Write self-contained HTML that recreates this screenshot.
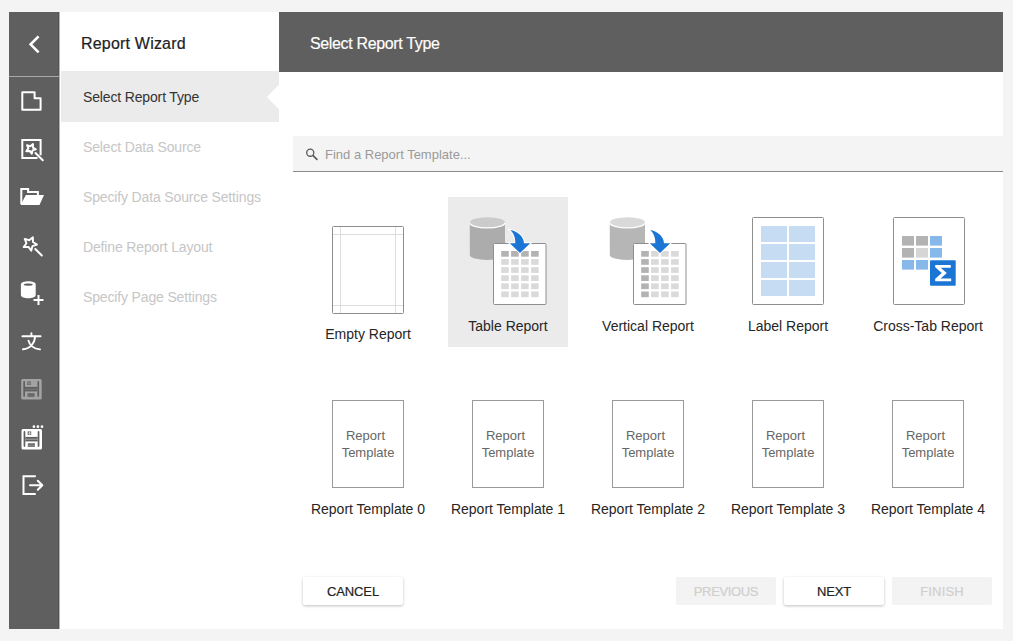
<!DOCTYPE html>
<html><head><meta charset="utf-8">
<style>
*{margin:0;padding:0;box-sizing:border-box}
html,body{width:1013px;height:641px;overflow:hidden;background:#f4f4f4;font-family:"Liberation Sans",sans-serif}
.abs{position:absolute}
#side{left:9px;top:12px;width:50px;height:617px;background:#5f5f5f}
#panel{left:59px;top:12px;width:220px;height:617px;background:#fff}
#main{left:279px;top:12px;width:724px;height:617px;background:#fff}
#hdr{left:279px;top:12px;width:724px;height:60px;background:#5f5f5f}
.t{position:absolute;white-space:nowrap}
#title{left:81px;top:34px;font-size:16px;color:#222;line-height:20px;letter-spacing:0.2px;-webkit-text-stroke:0.2px #222}
#hdrt{left:310px;top:34px;font-size:16px;color:#fff;line-height:20px;letter-spacing:-0.35px;-webkit-text-stroke:0.15px #fff}
#sel{left:61px;top:71px;width:218px;height:51px;background:#ebebeb}
.step{left:83px;font-size:14px;line-height:18px;color:#c6c6c6;letter-spacing:-0.15px}
#search{left:293px;top:136px;width:710px;height:36px;background:#f4f4f4;border-bottom:1px solid #8c8c8c}
#ph{left:325px;top:146px;font-size:13px;line-height:18px;color:#9a9a9a}
.lbl{position:absolute;width:140px;text-align:center;font-size:14px;line-height:18px;color:#262626;white-space:nowrap}
.tpl{position:absolute;width:72px;height:88px;border:1px solid #9a9a9a;background:#fff}
.tplt{position:absolute;left:0;width:100%;text-align:center;font-size:13px;line-height:16.5px;color:#666}
.btn{position:absolute;top:577px;width:100px;height:28px;border-radius:2px;font-size:13px;text-align:center;line-height:30px;letter-spacing:-0.1px;-webkit-text-stroke:0.2px currentColor}
.bw{background:#fff;color:#222;box-shadow:0 1px 3px rgba(0,0,0,0.25)}
.bd{background:#f3f3f3;color:#cfcfcf}
</style></head><body>
<div id="side" class="abs"></div>
<div id="panel" class="abs"></div>
<div id="main" class="abs"></div>
<div class="abs" style="left:58px;top:12px;width:1px;height:617px;background:#555"></div>
<div class="abs" style="left:59px;top:12px;width:1px;height:617px;background:#b4b4b4"></div>

<div id="hdr" class="abs"></div>
<div id="title" class="t">Report Wizard</div>
<div id="hdrt" class="t">Select Report Type</div>
<div id="sel" class="abs"></div>
<svg class="abs" style="left:0;top:0" width="1013" height="641">
  <polygon points="279.5,84.3 266.8,97 279.5,109.7" fill="#fff"/>
</svg>
<div class="t step" style="top:88px;color:#333">Select Report Type</div>
<div class="t step" style="top:138px">Select Data Source</div>
<div class="t step" style="top:188px">Specify Data Source Settings</div>
<div class="t step" style="top:238px">Define Report Layout</div>
<div class="t step" style="top:288px">Specify Page Settings</div>

<div id="search" class="abs"></div>
<div id="ph" class="t">Find a Report Template...</div>
<svg class="abs" style="left:0;top:0" width="1013" height="641"><circle cx="310.25" cy="152.7" r="3.55" fill="none" stroke="#5a5a5a" stroke-width="1.3"/><line x1="313.1" y1="155.6" x2="316.9" y2="159.3" stroke="#5a5a5a" stroke-width="1.7" stroke-linecap="round"/></svg>

<div class="abs" style="left:448px;top:197px;width:120px;height:150px;background:#ebebeb"></div>

<svg class="abs" style="left:0;top:0" width="1013" height="641">
<rect x="332.5" y="226.5" width="71" height="87" rx="1" fill="#fff" stroke="#8e8e8e"/>
<path d="M340.5,227 V313 M395.5,227 V313 M333,234.5 H403 M333,305.5 H403" stroke="#dedede" stroke-width="1"/>
<g transform="translate(0,0)">
<path d="M469.8,222.5 A17.6,5.2 0 0 0 505,222.5 V255 A17.6,5 0 0 1 469.8,255 Z" fill="rgba(109,109,109,0.5)"/>
<ellipse cx="487.4" cy="222.5" rx="17.6" ry="5.2" fill="rgba(128,128,128,0.3)"/>
<path d="M469.8,222.7 A17.6,5.2 0 0 0 505,222.7" fill="none" stroke="#fff" stroke-width="1.3"/>
<rect x="493.5" y="243.5" width="52.5" height="61" rx="1" fill="#fff" stroke="#8e8e8e" stroke-width="1"/>
<rect x="501.2" y="251" width="7.6" height="5.7" fill="#b3b3b3"/>
<rect x="511.1" y="251" width="7.6" height="5.7" fill="#b3b3b3"/>
<rect x="521.1" y="251" width="7.6" height="5.7" fill="#b3b3b3"/>
<rect x="531.1" y="251" width="7.6" height="5.7" fill="#b3b3b3"/>
<rect x="501.2" y="259.1" width="7.6" height="5.7" fill="#dadada"/>
<rect x="511.1" y="259.1" width="7.6" height="5.7" fill="#dadada"/>
<rect x="521.1" y="259.1" width="7.6" height="5.7" fill="#dadada"/>
<rect x="531.1" y="259.1" width="7.6" height="5.7" fill="#dadada"/>
<rect x="501.2" y="267.2" width="7.6" height="5.7" fill="#dadada"/>
<rect x="511.1" y="267.2" width="7.6" height="5.7" fill="#dadada"/>
<rect x="521.1" y="267.2" width="7.6" height="5.7" fill="#dadada"/>
<rect x="531.1" y="267.2" width="7.6" height="5.7" fill="#dadada"/>
<rect x="501.2" y="275.3" width="7.6" height="5.7" fill="#dadada"/>
<rect x="511.1" y="275.3" width="7.6" height="5.7" fill="#dadada"/>
<rect x="521.1" y="275.3" width="7.6" height="5.7" fill="#dadada"/>
<rect x="531.1" y="275.3" width="7.6" height="5.7" fill="#dadada"/>
<rect x="501.2" y="283.4" width="7.6" height="5.7" fill="#dadada"/>
<rect x="511.1" y="283.4" width="7.6" height="5.7" fill="#dadada"/>
<rect x="521.1" y="283.4" width="7.6" height="5.7" fill="#dadada"/>
<rect x="531.1" y="283.4" width="7.6" height="5.7" fill="#dadada"/>
<rect x="501.2" y="291.5" width="7.6" height="5.7" fill="#dadada"/>
<rect x="511.1" y="291.5" width="7.6" height="5.7" fill="#dadada"/>
<rect x="521.1" y="291.5" width="7.6" height="5.7" fill="#dadada"/>
<rect x="531.1" y="291.5" width="7.6" height="5.7" fill="#dadada"/>
<path d="M510.3,230.1 C516.5,231 523.8,236 524,243.2 H530.2 L520,252.9 L509.8,243.2 H515.3 C515.5,237.5 513.5,233 510.3,230.1 Z" fill="#1a75d5" stroke="#fff" stroke-width="2" paint-order="stroke" stroke-linejoin="miter"/>
</g>
<g transform="translate(140,0)">
<path d="M469.8,222.5 A17.6,5.2 0 0 0 505,222.5 V255 A17.6,5 0 0 1 469.8,255 Z" fill="rgba(109,109,109,0.5)"/>
<ellipse cx="487.4" cy="222.5" rx="17.6" ry="5.2" fill="rgba(128,128,128,0.3)"/>
<path d="M469.8,222.7 A17.6,5.2 0 0 0 505,222.7" fill="none" stroke="#fff" stroke-width="1.3"/>
<rect x="493.5" y="243.5" width="52.5" height="61" rx="1" fill="#fff" stroke="#8e8e8e" stroke-width="1"/>
<rect x="501.2" y="251" width="7.6" height="5.7" fill="#b3b3b3"/>
<rect x="511.1" y="251" width="7.6" height="5.7" fill="#dadada"/>
<rect x="521.1" y="251" width="7.6" height="5.7" fill="#dadada"/>
<rect x="531.1" y="251" width="7.6" height="5.7" fill="#dadada"/>
<rect x="501.2" y="259.1" width="7.6" height="5.7" fill="#b3b3b3"/>
<rect x="511.1" y="259.1" width="7.6" height="5.7" fill="#dadada"/>
<rect x="521.1" y="259.1" width="7.6" height="5.7" fill="#dadada"/>
<rect x="531.1" y="259.1" width="7.6" height="5.7" fill="#dadada"/>
<rect x="501.2" y="267.2" width="7.6" height="5.7" fill="#b3b3b3"/>
<rect x="511.1" y="267.2" width="7.6" height="5.7" fill="#dadada"/>
<rect x="521.1" y="267.2" width="7.6" height="5.7" fill="#dadada"/>
<rect x="531.1" y="267.2" width="7.6" height="5.7" fill="#dadada"/>
<rect x="501.2" y="275.3" width="7.6" height="5.7" fill="#b3b3b3"/>
<rect x="511.1" y="275.3" width="7.6" height="5.7" fill="#dadada"/>
<rect x="521.1" y="275.3" width="7.6" height="5.7" fill="#dadada"/>
<rect x="531.1" y="275.3" width="7.6" height="5.7" fill="#dadada"/>
<rect x="501.2" y="283.4" width="7.6" height="5.7" fill="#b3b3b3"/>
<rect x="511.1" y="283.4" width="7.6" height="5.7" fill="#dadada"/>
<rect x="521.1" y="283.4" width="7.6" height="5.7" fill="#dadada"/>
<rect x="531.1" y="283.4" width="7.6" height="5.7" fill="#dadada"/>
<rect x="501.2" y="291.5" width="7.6" height="5.7" fill="#b3b3b3"/>
<rect x="511.1" y="291.5" width="7.6" height="5.7" fill="#dadada"/>
<rect x="521.1" y="291.5" width="7.6" height="5.7" fill="#dadada"/>
<rect x="531.1" y="291.5" width="7.6" height="5.7" fill="#dadada"/>
<path d="M510.3,230.1 C516.5,231 523.8,236 524,243.2 H530.2 L520,252.9 L509.8,243.2 H515.3 C515.5,237.5 513.5,233 510.3,230.1 Z" fill="#1a75d5" stroke="#fff" stroke-width="2" paint-order="stroke" stroke-linejoin="miter"/>
</g>
<rect x="752.5" y="217.5" width="71" height="87" rx="1" fill="#fff" stroke="#8e8e8e"/>
<rect x="761" y="226" width="26" height="16" fill="#c5dcf2"/>
<rect x="789" y="226" width="26" height="16" fill="#c5dcf2"/>
<rect x="761" y="244" width="26" height="16" fill="#c5dcf2"/>
<rect x="789" y="244" width="26" height="16" fill="#c5dcf2"/>
<rect x="761" y="262" width="26" height="16" fill="#c5dcf2"/>
<rect x="789" y="262" width="26" height="16" fill="#c5dcf2"/>
<rect x="761" y="280" width="26" height="16" fill="#c5dcf2"/>
<rect x="789" y="280" width="26" height="16" fill="#c5dcf2"/>
<rect x="893.5" y="217.5" width="71" height="87" rx="1" fill="#fff" stroke="#8e8e8e"/>
<rect x="902" y="236" width="12" height="9.6" fill="#b3b3b3"/>
<rect x="916" y="236" width="12" height="9.6" fill="#b3b3b3"/>
<rect x="930" y="236" width="12" height="9.6" fill="#86b8ea"/>
<rect x="902" y="248" width="12" height="9.6" fill="#b3b3b3"/>
<rect x="916" y="248" width="12" height="9.6" fill="#d6d6d6"/>
<rect x="930" y="248" width="12" height="9.6" fill="#86b8ea"/>
<rect x="902" y="260" width="12" height="9.6" fill="#86b8ea"/>
<rect x="916" y="260" width="12" height="9.6" fill="#86b8ea"/>
<rect x="930" y="260.2" width="25.7" height="25.6" rx="1" fill="#1a75d5"/>
<path d="M935.2,265 H950.8 V267.8 H940.6 L946.8,273 L940.6,278.4 H951.2 V281.2 H935.2 V278.8 L941.8,273 L935.2,267.2 Z" fill="#fff"/>
</svg>
<div class="lbl" style="left:298px;top:325px">Empty Report</div>
<div class="lbl" style="left:438px;top:317px">Table Report</div>
<div class="lbl" style="left:578px;top:317px">Vertical Report</div>
<div class="lbl" style="left:718px;top:317px">Label Report</div>
<div class="lbl" style="left:858px;top:317px">Cross-Tab Report</div>

<div class="tpl" style="left:332px;top:400px"><div class="tplt" style="top:27px"><span style="position:relative;left:-2.5px">Report</span><br>Template</div></div>
<div class="tpl" style="left:472px;top:400px"><div class="tplt" style="top:27px"><span style="position:relative;left:-2.5px">Report</span><br>Template</div></div>
<div class="tpl" style="left:612px;top:400px"><div class="tplt" style="top:27px"><span style="position:relative;left:-2.5px">Report</span><br>Template</div></div>
<div class="tpl" style="left:752px;top:400px"><div class="tplt" style="top:27px"><span style="position:relative;left:-2.5px">Report</span><br>Template</div></div>
<div class="tpl" style="left:892px;top:400px"><div class="tplt" style="top:27px"><span style="position:relative;left:-2.5px">Report</span><br>Template</div></div>
<div class="lbl" style="left:298px;top:500px">Report Template 0</div>
<div class="lbl" style="left:438px;top:500px">Report Template 1</div>
<div class="lbl" style="left:578px;top:500px">Report Template 2</div>
<div class="lbl" style="left:718px;top:500px">Report Template 3</div>
<div class="lbl" style="left:858px;top:500px">Report Template 4</div>

<div class="btn bw" style="left:303px">CANCEL</div>
<div class="btn bd" style="left:676px;letter-spacing:-0.35px">PREVIOUS</div>
<div class="btn bw" style="left:784px;letter-spacing:-0.15px">NEXT</div>
<div class="btn bd" style="left:892px;letter-spacing:0.15px">FINISH</div>

<svg class="abs" style="left:0;top:0" width="70" height="641" fill="none" stroke="#fff" stroke-width="2">
  <line x1="9" y1="76.5" x2="59" y2="76.5" stroke="#a8a8a8" stroke-width="1"/>
  <polyline points="38.6,36.3 30.6,44.3 38.6,52.3" stroke-width="2.6"/>
  <path d="M22.3,92.3 H34.6 V98.2 H40.6 V109.8 H22.3 Z" stroke-linejoin="round"/>
  <path d="M40.6,155.2 V140 H22.3 V158 H37.5"/>
  <line x1="35.5" y1="153" x2="42.8" y2="160.3" stroke-linecap="round"/>
  <polygon points="32.96,144.08 32.90,147.54 35.86,149.32 32.56,150.34 31.77,153.71 29.79,150.88 26.34,151.17 28.42,148.41 27.07,145.22 30.34,146.34" stroke-width="2" stroke-linejoin="round"/>
  <polygon points="32.90,237.27 32.96,242.00 36.95,244.57 32.46,246.09 31.25,250.67 28.42,246.87 23.69,247.14 26.43,243.27 24.71,238.86 29.23,240.26" stroke-width="1.9" stroke-linejoin="round"/>
  <line x1="35.3" y1="249" x2="41.8" y2="255.5" stroke-linecap="round"/>
  <!-- folder -->
  <path d="M21.3,204 V189.1 H28.1 V192.1 H37.9 V195.5" stroke-width="2"/>
  <polygon points="25.9,194.9 44,194.9 39.5,204.9 20.5,204.9" fill="#fff" stroke="none"/>
  <!-- db plus -->
  <path d="M20.9,284.5 C20.9,280.3 35.7,280.3 35.7,284.5 V295 C35.7,299.3 20.9,299.3 20.9,295 Z" fill="#fff" stroke="none"/>
  <ellipse cx="28.3" cy="284.6" rx="4.5" ry="1.2" fill="#5f5f5f" stroke="none"/>
  <path d="M38.5,295 V305 M33.5,300 H43.5" stroke-width="2"/>
  <!-- wen -->
  <path d="M22.4,336.3 H40.6 M31.4,333.1 V336 M28.5,340.6 C29.5,344.8 33.2,348.6 40,349.4 M35.1,337.2 C34.6,343 30.6,348.6 23,349.3" stroke-width="1.9" stroke-linecap="round"/>
  <!-- save disabled -->
  <g stroke="none">
    <rect x="21.2" y="378.9" width="20.5" height="20.5" rx="1.5" fill="#a3a3a3"/>
    <rect x="23.3" y="381.1" width="1.7" height="15.8" rx="0.8" fill="#5f5f5f"/>
    <rect x="37.4" y="381.1" width="1.7" height="15.8" rx="0.8" fill="#5f5f5f"/>
    <rect x="27.3" y="381.4" width="3.6" height="3.5" fill="#5f5f5f"/>
    <rect x="28.8" y="381.4" width="0.6" height="3.5" fill="#a3a3a3"/>
    <rect x="27.3" y="382.8" width="3.6" height="0.6" fill="#a3a3a3"/>
    <rect x="25.0" y="386.9" width="12.4" height="4.5" fill="#5f5f5f"/>
    <rect x="25.0" y="388.8" width="12.4" height="0.7" fill="#a3a3a3" opacity="0.6"/>
    <rect x="27.5" y="393.3" width="7.1" height="3.5" fill="#5f5f5f"/>
    <rect x="27.5" y="394.8" width="7.1" height="0.6" fill="#a3a3a3" opacity="0.6"/>
  </g>
  <!-- save as -->
  <g stroke="none">
    <rect x="21.5" y="428.9" width="20.5" height="20.5" rx="1.5" fill="#fff"/>
    <rect x="23.6" y="431.1" width="1.7" height="15.8" rx="0.8" fill="#5f5f5f"/>
    <rect x="37.7" y="431.1" width="1.7" height="15.8" rx="0.8" fill="#5f5f5f"/>
    <rect x="27.6" y="431.4" width="3.6" height="3.5" fill="#5f5f5f"/>
    <rect x="29.1" y="431.4" width="0.6" height="3.5" fill="#fff"/>
    <rect x="27.6" y="432.8" width="3.6" height="0.6" fill="#fff"/>
    <rect x="25.3" y="436.9" width="12.4" height="4.5" fill="#5f5f5f"/>
    <rect x="25.3" y="438.8" width="12.4" height="0.7" fill="#fff" opacity="0.6"/>
    <rect x="27.8" y="443.3" width="7.1" height="3.5" fill="#5f5f5f"/>
    <rect x="27.8" y="444.8" width="7.1" height="0.6" fill="#fff" opacity="0.6"/>
  </g>
  <circle cx="33.9" cy="426.7" r="1.35" fill="#fff" stroke="none"/>
  <circle cx="37.9" cy="426.7" r="1.35" fill="#fff" stroke="none"/>
  <circle cx="42.0" cy="426.7" r="1.35" fill="#fff" stroke="none"/>
  <!-- exit -->
  <path d="M35,476.2 H23.5 V494.1 H35" stroke-width="2" stroke-linecap="round"/>
  <path d="M30,485.2 H42 M37.8,480.7 L42.3,485.2 L37.8,489.7" stroke-width="2" stroke-linecap="round" stroke-linejoin="round"/>
</svg>
</body></html>
